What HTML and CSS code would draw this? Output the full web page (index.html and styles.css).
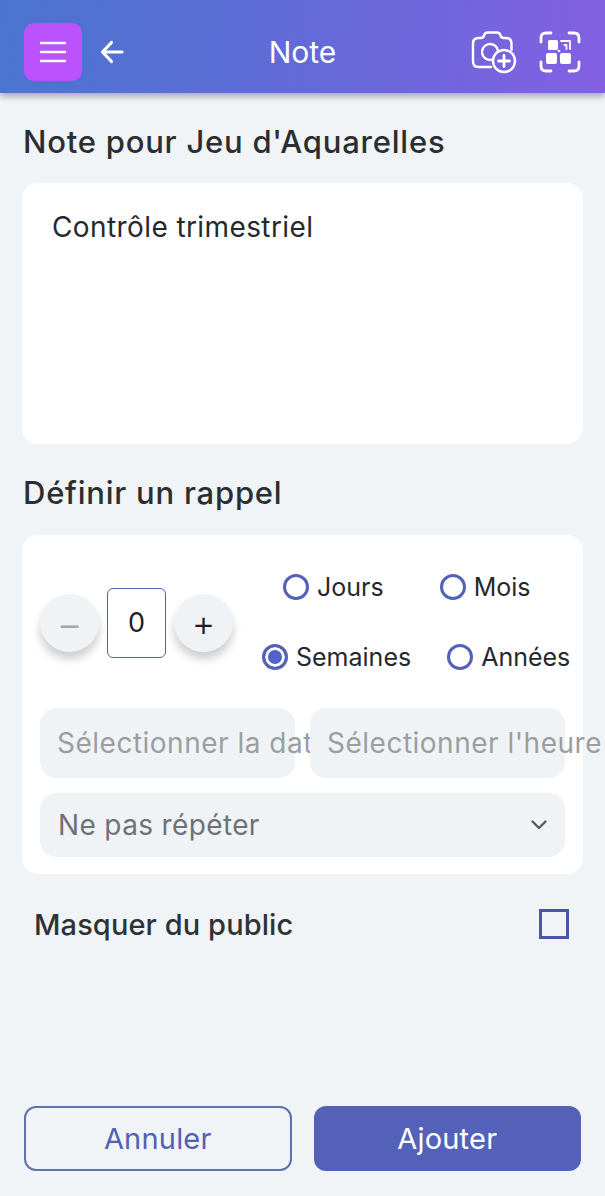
FILE: index.html
```html
<!DOCTYPE html>
<html lang="fr">
<head>
    <meta charset="UTF-8">
    <meta name="viewport" content="width=device-width, initial-scale=1.0">
    <title>Note</title>
    <link rel="stylesheet" href="styles.css">
</head>
<body>
    <header class="topbar">
        <button class="menu-btn" aria-label="Menu">
            <svg width="28" height="24" viewBox="0 0 28 24" fill="none" stroke="#fff" stroke-width="2.4" stroke-linecap="round">
                <path d="M2 3h24M2 12h24M2 21h24"/>
            </svg>
        </button>
        <svg class="back-icon" width="24" height="24" viewBox="0 0 24 24" fill="none" stroke="#fff" stroke-width="3.2" stroke-linecap="round" stroke-linejoin="round">
            <path d="M22 12H3M11.5 2.5 2.500 12l9 9.500"/>
        </svg>
        <h1 class="topbar-title">Note</h1>
        <svg class="camera-icon" width="46" height="44" viewBox="0 0 46 44" fill="none" stroke="#fff" stroke-width="2.400" stroke-linecap="round" stroke-linejoin="round">
            <path d="M20 37H7.500C4 37 2 35 2 31.500V13.500C2 10 4 8 7.500 8H10C11.500 8 12.500 7 13 5.500 13.600 3.500 14.500 2.500 16.500 2.500H26C28 2.500 29 3.500 29.500 5.500 30 7 31 8 32.500 8H35C38.500 8 40.500 10 40.500 13.500V20"/>
            <path d="M26.900 20.600A8 8 0 1 0 21 29.700"/>
            <circle cx="33" cy="31" r="11"/>
            <path d="M33 25.500v11M27.500 31h11" stroke-width="2.800"/>
        </svg>
        <svg class="qr-icon" width="42" height="42" viewBox="0 0 42 42" fill="none" stroke="#fff" stroke-width="2.800" stroke-linecap="round" stroke-linejoin="round">
            <path d="M2 11V7C2 3.500 3.500 2 7 2H12M30 2H35C38.500 2 40 3.500 40 7V11M2 31V35C2 38.500 3.500 40 7 40H12M30 40H35C38.500 40 40 38.500 40 35V31"/>
            <rect x="9" y="9" width="10" height="10" rx="1.500" fill="#fff" stroke="none"/>
            <rect x="7" y="22" width="11" height="11" rx="2" fill="#fff" stroke="none"/>
            <rect x="21" y="22" width="11" height="11" rx="2" fill="#fff" stroke="none"/>
            <path d="M22 10h9v8M25.500 14h2v4M19.500 20h1" stroke-width="1.800"/>
        </svg>
    </header>

    <main class="content">
        <h2 class="section-title">Note pour Jeu d'Aquarelles</h2>
        <div class="card note-card">Contrôle trimestriel</div>

        <h2 class="section-title reminder-title">Définir un rappel</h2>
        <div class="card reminder-card">
            <div class="reminder-top">
                <div class="stepper">
                    <button class="step-btn step-minus">−</button>
                    <div class="step-value">0</div>
                    <button class="step-btn">+</button>
                </div>
                <div class="units">
                    <div class="unit-row unit-row-first">
                        <label class="unit"><span class="radio"></span>Jours</label>
                        <label class="unit"><span class="radio"></span>Mois</label>
                    </div>
                    <div class="unit-row unit-row-second">
                        <label class="unit"><span class="radio radio-on"></span>Semaines</label>
                        <label class="unit"><span class="radio"></span>Années</label>
                    </div>
                </div>
            </div>
            <div class="date-row">
                <div class="field"><span class="field-text field-text-date">Sélectionner la date</span></div>
                <div class="field"><span class="field-text field-text-time">Sélectionner l'heure(</span></div>
            </div>
            <div class="select-field">
                <span>Ne pas répéter</span>
                <svg width="18" height="12" viewBox="0 0 18 12" fill="none" stroke="#555b60" stroke-width="2.400" stroke-linecap="round" stroke-linejoin="round">
                    <path d="M2.500 2.500 9 9l6.500-6.500"/>
                </svg>
            </div>
        </div>

        <div class="public-row">
            <span>Masquer du public</span>
            <span class="checkbox"></span>
        </div>
    </main>

    <footer class="actions">
        <button class="action action-cancel">Annuler</button>
        <button class="action action-add">Ajouter</button>
    </footer>
</body>
</html>
```

FILE: styles.css
```css
* {
    box-sizing: border-box;
}
html, body {
    margin: 0;
    height: 100%;
    overflow: hidden;
}
body {
    display: flex;
    flex-direction: column;
    height: 1196px;
    font-family: Inter, "Liberation Sans", sans-serif;
    background-color: #f0f4f6;
    color: #26292c;
}
button {
    font-family: inherit;
    border: none;
    padding: 0;
}

/* top bar */
.topbar {
    position: relative;
    display: flex;
    align-items: center;
    height: 93px;
    padding: 11px 24px 0;
    background: linear-gradient(95deg, #4a75cf 0%, #5c6cd6 40%, #8360e3 100%);
    box-shadow: 0 4px 6px rgba(0, 0, 0, 0.28);
}
.menu-btn {
    display: flex;
    align-items: center;
    justify-content: center;
    width: 58px;
    height: 58px;
    border-radius: 10px;
    background-color: #bb52fb;
}
.back-icon {
    margin-left: 18px;
}
.topbar-title {
    flex: 1;
    margin: 0;
    text-align: center;
    color: #fff;
    font-size: 30px;
    font-weight: 400;
    padding-left: 10px;
}
.qr-icon {
    margin-left: 22px;
}

/* main */
.content {
    flex: 1;
    padding: 0 22px;
}
.section-title {
    margin: 30px 0 0 1px;
    height: 38px;
    line-height: 38px;
    font-size: 31px;
    font-weight: 500;
    letter-spacing: 0.77px;
    color: #2b2e31;
}
.card {
    background-color: #fff;
    border-radius: 16px;
}
.note-card {
    height: 261px;
    margin-top: 22px;
    padding: 26px 30px;
    font-size: 28px;
    line-height: 36px;
    letter-spacing: 0.4px;
}
.reminder-card {
    height: 339px;
    margin-top: 23px;
    padding: 17px 18px 0;
}

.reminder-top {
    display: flex;
    height: 156px;
}
.stepper {
    display: flex;
    align-items: center;
    gap: 8px;
    height: 142px;
}
.step-btn {
    display: flex;
    align-items: center;
    justify-content: center;
    width: 59px;
    height: 58px;
    border-radius: 50%;
    background-color: #f0f3f5;
    box-shadow: 0 7px 10px rgba(0, 0, 0, 0.2);
    font-size: 36px;
    font-weight: 300;
    color: #1d1f21;
}
.step-minus {
    color: #a3a7aa;
    font-size: 40px;
}
.step-value {
    width: 59px;
    height: 70px;
    line-height: 68px;
    text-align: center;
    border: 1px solid #5362b8;
    border-radius: 6px;
    font-size: 27px;
    color: #1d1f21;
}

.units {
    flex: 1;
}
.unit-row {
    display: flex;
    height: 70px;
    align-items: center;
}
.unit-row-first {
    padding-left: 50px;
    gap: 56px;
}
.unit-row-second {
    padding-left: 29px;
    gap: 36px;
}
.unit {
    display: flex;
    align-items: center;
    gap: 8px;
    font-size: 25px;
}
.radio {
    width: 26px;
    height: 26px;
    border: 3px solid #5362b8;
    border-radius: 50%;
    background-color: #fff;
}
.radio-on {
    background-color: #5362c8;
    box-shadow: inset 0 0 0 3px #fff;
}

.date-row {
    display: flex;
    gap: 15px;
}
.field {
    flex: 0 0 255px;
    min-width: 0;
    height: 70px;
    line-height: 70px;
    padding-left: 17px;
    border-radius: 16px;
    background-color: #f0f3f5;
    color: #9b9ea1;
    font-size: 28px;
    letter-spacing: 0.5px;
    white-space: nowrap;
}
/* both labels are too long for their box, the text just gets cut */
.field-text {
    display: block;
    overflow: hidden;
}
.field-text-date {
    width: 254px;
}
.field-text-time {
    width: 278px;
}
.select-field {
    display: flex;
    align-items: center;
    justify-content: space-between;
    height: 64px;
    margin-top: 15px;
    padding: 0 17px 0 18px;
    border-radius: 16px;
    background-color: #f0f3f5;
    color: #6d7276;
    font-size: 28px;
    letter-spacing: 0.36px;
}

.public-row {
    display: flex;
    align-items: center;
    justify-content: space-between;
    height: 100px;
    padding: 0 14px 0 12px;
    font-size: 29px;
    font-weight: 500;
    letter-spacing: 0.1px;
    color: #303336;
}
.checkbox {
    width: 30px;
    height: 30px;
    border: 3px solid #4a57a6;
}

/* buttons at the bottom */
.actions {
    display: grid;
    grid-template-columns: 1fr 1fr;
    gap: 22px;
    padding: 0 24px 25px;
}
.action {
    height: 65px;
    border-radius: 12px;
    font-size: 29px;
    letter-spacing: 0.2px;
}
.action-cancel {
    background-color: transparent;
    border: 2px solid #6170b0;
    color: #5261b4;
}
.action-add {
    background-color: #5362b8;
    color: #fff;
}
```
